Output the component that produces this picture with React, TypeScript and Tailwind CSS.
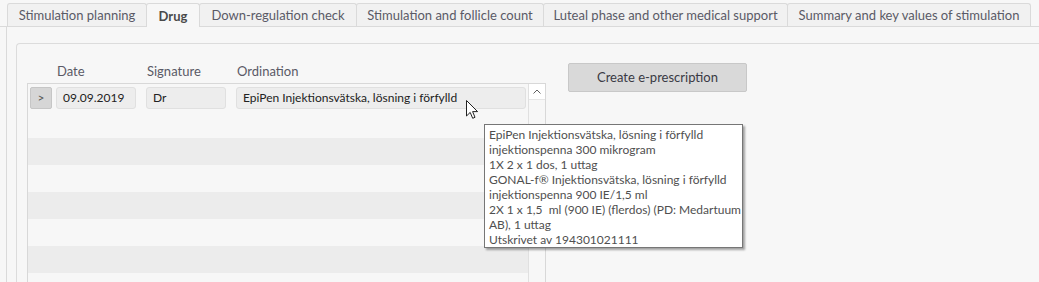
const tabs = [
  { label: "Stimulation planning", w: "w-[140px]" },
  { label: "Drug", w: "w-[54px]", active: true },
  { label: "Down-regulation check", w: "w-[158px]" },
  { label: "Stimulation and follicle count", w: "w-[188px]" },
  { label: "Luteal phase and other medical support", w: "w-[245px]" },
  { label: "Summary and key values of stimulation", w: "w-[244px]" },
];

const tooltipLines = [
  "EpiPen Injektionsvätska, lösning i förfylld",
  "injektionspenna 300 mikrogram",
  "1X 2 x 1 dos, 1 uttag",
  "GONAL-f® Injektionsvätska, lösning i förfylld",
  "injektionspenna 900 IE/1,5 ml",
  "2X 1 x 1,5  ml (900 IE) (flerdos) (PD: Medartuum",
  "AB), 1 uttag",
  "Utskrivet av 194301021111",
];

const stripes = [false, true, false, true, false, true, false];

export default function App() {
  return (
    <div
      className="relative w-[1039px] h-[282px] overflow-hidden bg-[#f7f7f7] text-[#333]"
      style={{ fontFamily: '"Segoe UI", Lato, "Noto Sans", sans-serif' }}
    >
      {/* Tab strip */}
      <div className="flex pl-[7px] pt-[3px] border-b border-[#dadada]">
        {tabs.map((t) =>
          t.active ? (
            <div
              key={t.label}
              className={`${t.w} h-[24px] -mb-px -ml-px border border-b-0 border-[#dadada] rounded-t-[3px] bg-[#f7f7f7] flex items-center justify-center pt-[2px] text-[13px] font-bold text-[#4a4a4a]`}
            >
              {t.label}
            </div>
          ) : (
            <div
              key={t.label}
              className={`${t.w} h-[23px] -ml-px first:ml-0 border border-b-0 border-[#dadada] rounded-t-[3px] bg-[#f1f1f1] flex items-center justify-center pt-[2px] text-[13px] text-[#5a5a66]`}
            >
              {t.label}
            </div>
          )
        )}
      </div>

      {/* Tab page */}
      <div className="ml-[6px] h-[260px] border-l border-[#dadada] pt-[16px] pl-[9px]">
        {/* Group box */}
        <div className="h-full border-l border-t border-[#dcdcdc] rounded-tl-[4px] flex pl-[10px]">
          <div className="flex flex-col pt-[20px]">
            {/* Column headers */}
            <div className="h-[16px] mb-[3px] flex items-center text-[13px] text-[#5a5a66]">
              <span className="ml-[30px] w-[90px]">Date</span>
              <span className="w-[90px]">Signature</span>
              <span>Ordination</span>
            </div>

            {/* Grid */}
            <div className="w-[519px] h-[200px] border border-[#d8d8d8] flex">
              <div className="flex-1 flex flex-col">
                <div className="h-[27px] shrink-0 flex items-center pl-[2px] text-[12px] text-[#222]">
                  <div className="w-[22px] h-[22px] bg-[#d6d6d6] border border-[#c6c6c6] rounded-[2px] flex items-center justify-center text-[12px] text-[#555]">
                    &gt;
                  </div>
                  <div className="ml-[4px] w-[80px] h-[22px] bg-[#ededed] border border-[#e0e0e0] rounded-[3px] flex items-center pl-[6px]">
                    09.09.2019
                  </div>
                  <div className="ml-[10px] w-[80px] h-[22px] bg-[#ededed] border border-[#e0e0e0] rounded-[3px] flex items-center pl-[6px]">
                    Dr
                  </div>
                  <div className="ml-[10px] w-[290px] h-[22px] bg-[#ededed] border border-[#e0e0e0] rounded-[3px] flex items-center pl-[6px]">
                    EpiPen Injektionsvätska, lösning i förfylld
                  </div>
                </div>
                {stripes.map((g, i) => (
                  <div
                    key={i}
                    className={`h-[27px] shrink-0 ${g ? "bg-[#ececec]" : "bg-[#f7f7f7]"}`}
                  />
                ))}
              </div>
              {/* Scrollbar */}
              <div className="w-[17px] border-l border-[#e0e0e0] flex flex-col">
                <div className="h-[16px] bg-white border-b border-[#e6e6e6] flex items-center justify-center">
                  <svg width="8" height="5" viewBox="0 0 8 5">
                    <polyline points="0.5,4.5 4,1 7.5,4.5" fill="none" stroke="#606060" strokeWidth="1" />
                  </svg>
                </div>
              </div>
            </div>
          </div>

          {/* Right side */}
          <div className="ml-[22px] pt-[19px]">
            <button className="w-[179px] h-[29px] bg-[#d9d9d9] border border-[#c8c8c8] rounded-[2px] text-[13px] text-[#3a3a44]">
              Create e-prescription
            </button>
          </div>
        </div>
      </div>

      {/* Mouse cursor */}
      <svg className="absolute left-[466px] top-[100px]" width="13" height="20" viewBox="0 0 13 20">
        <path
          d="M0.5 0.5 L0.5 16 L4.2 12.4 L6.7 18.3 L9 17.3 L6.6 11.6 L11.6 11.6 Z"
          fill="white"
          stroke="#222"
          strokeWidth="1"
          strokeLinejoin="round"
        />
      </svg>

      {/* Tooltip */}
      <div className="absolute left-[484px] top-[124px] w-[259px] h-[124px] bg-white border border-[#767676] shadow-[2px_2px_2px_rgba(0,0,0,0.35)] pl-[4px] pt-[2px] text-[12px] leading-[15px] text-[#4f4f4f]">
        {tooltipLines.map((l, i) => (
          <div key={i} className="whitespace-pre">
            {l}
          </div>
        ))}
      </div>
    </div>
  );
}
